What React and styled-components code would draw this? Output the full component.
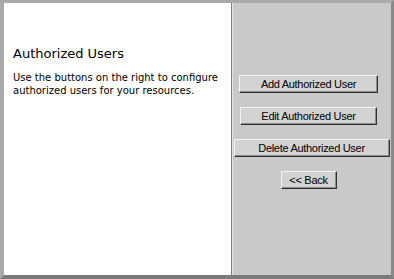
import React from "react";
import styled, { createGlobalStyle } from "styled-components";

const Global = createGlobalStyle`
  html, body {
    margin: 0;
    padding: 0;
    background: #fff;
  }
`;

const Frame = styled.div`
  box-sizing: border-box;
  width: 394px;
  height: 279px;
  display: grid;
  grid-template-columns: 227px minmax(0, 1fr);
  border-top: 3px solid #a9a9a9;
  border-left: 4px solid #a9a9a9;
  border-right: 3px solid #8a8a8a;
  border-bottom: 4px solid #7a7a7a;
`;

const InfoPane = styled.div`
  background: #fff;
  padding: 43px 10px 0 9px;
  font-family: "DejaVu Sans", Verdana, sans-serif;
  color: #000;
`;

const Title = styled.h1`
  margin: 0 0 9px;
  font-size: 13px;
  line-height: 16px;
  font-weight: normal;
`;

const Text = styled.p`
  margin: 0;
  font-size: 10px;
  line-height: 13px;
`;

const ActionPane = styled.div`
  background: #c9c9c9;
  border-left: 1px solid #7d7d7d;
  box-shadow: inset 1px 0 0 #e4e4e4;
  display: flex;
  flex-direction: column;
  align-items: center;
  gap: 14px;
  padding-top: 72px;
  padding-right: 6px;
`;

const Button = styled.button`
  box-sizing: border-box;
  width: ${(p) => p.$w}px;
  height: 18px;
  padding: 0;
  margin-right: ${(p) => -(p.$shift || 0)}px;
  background: #d2d2d2;
  border: 1px solid;
  border-color: #f4f4f4 #303030 #303030 #f4f4f4;
  box-shadow: inset -1px -1px 0 #8c8c8c;
  font-family: "Liberation Sans", Arial, sans-serif;
  font-size: 11px;
  letter-spacing: -0.3px;
  color: #000;
`;

export default function App() {
  return (
    <>
      <Global />
      <Frame>
        <InfoPane>
          <Title>Authorized Users</Title>
          <Text>
            Use the buttons on the right to configure authorized users for your
            resources.
          </Text>
        </InfoPane>
        <ActionPane>
          <Button $w={139}>Add Authorized User</Button>
          <Button $w={137}>Edit Authorized User</Button>
          <Button $w={156} $shift={6}>Delete Authorized User</Button>
          <Button $w={56}>&lt;&lt; Back</Button>
        </ActionPane>
      </Frame>
    </>
  );
}
